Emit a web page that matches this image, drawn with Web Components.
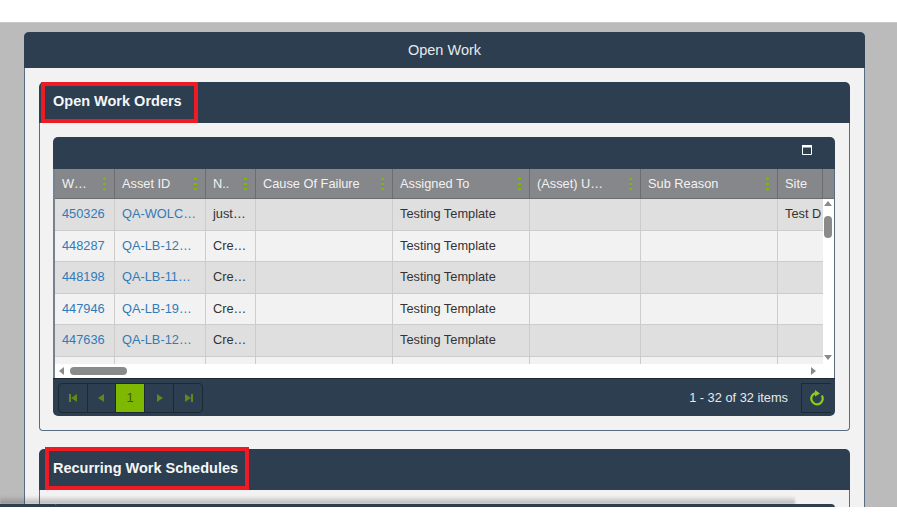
<!DOCTYPE html>
<html>
<head>
<meta charset="utf-8">
<style>
html, body { margin: 0; padding: 0; background: #fff; font-family: "Liberation Sans", Arial, sans-serif; }
body { padding-top: 22px; height: 508px; box-sizing: border-box; overflow: hidden; }
</style>
</head>
<body>
<work-page>
    <sub-panel title="Open Work Orders" mark="157">
        <work-grid></work-grid>
    </sub-panel>
    <sub-panel class="second" title="Recurring Work Schedules" mark="204" last>
        <div style="height:14px"></div>
        <div style="height:40px;background:#2c3e50;border-radius:4px 4px 0 0"></div>
    </sub-panel>
</work-page>

<script>
const pageTemplate = document.createElement('template')
pageTemplate.innerHTML = `
<style>
:host
{
    display: block;
    height: 485px;
    overflow: hidden;
    position: relative;
    background: #bbbbbb;
    border-top: 1px solid #c9c9c9;
    box-sizing: border-box;
    padding: 9px 32px 0 24px;
}
#window
{
    background: #f2f2f2;
    border-radius: 5px 5px 0 0;
    border-left: 1px solid #5a6c80;
    border-right: 1px solid #5a6c80;
    height: 600px;
}
#head
{
    height: 36px;
    margin: 0 -1px;
    background: #2c3e50;
    border-radius: 5px 5px 0 0;
    color: #e6e9ec;
    font-size: 14.5px;
    display: flex;
    align-items: center;
    justify-content: center;
}
#content
{
    padding: 14px 14px 0 14px;
    display: flex;
    flex-direction: column;
    gap: 18px;
}
#edge
{
    position: absolute;
    left: 0;
    width: 55px;
    bottom: 0;
    height: 3px;
    background: #2c3e50;
}
#shade
{
    position: absolute;
    left: 0;
    width: 795px;
    bottom: 3px;
    height: 8px;
    background: linear-gradient(rgba(60,60,60,0), rgba(60,60,60,.35));
    filter: blur(1px);
}
</style>
<div id="window">
    <div id="head">Open Work</div>
    <div id="content"><slot></slot></div>
</div>
<div id="shade"></div>
<div id="edge"></div>
`

class WorkPage extends HTMLElement
{
    constructor()
    {
        super()
        this.attachShadow({mode: "open"})
        this.shadowRoot.appendChild(pageTemplate.content.cloneNode(true))
    }
}

const panelTemplate = document.createElement('template')
panelTemplate.innerHTML = `
<style>
:host
{
    display: block;
    position: relative;
    border-radius: 5px;
}
#head
{
    height: 41px;
    background: #2c3e50;
    border-radius: 5px 5px 0 0;
    color: #f4f6f8;
    font-size: 14.5px;
    font-weight: bold;
    display: flex;
    align-items: center;
    padding: 0 0 4px 14px;
    box-sizing: border-box;
}
#body
{
    border: 1px solid #5a6c80;
    border-top: 0;
    border-radius: 0 0 4px 4px;
    padding: 14px 14px 14px 13px;
}
#mark
{
    position: absolute;
    left: 2px;
    top: 0;
    height: 41px;
    box-sizing: border-box;
    border: 4px solid #ed1c24;
}
</style>
<div id="head"><span id="title"></span></div>
<div id="body"><slot></slot></div>
<div id="mark"></div>
`

class SubPanel extends HTMLElement
{
    constructor()
    {
        super()
        this.attachShadow({mode: "open"})
        this.shadowRoot.appendChild(panelTemplate.content.cloneNode(true))
    }

    connectedCallback()
    {
        this.shadowRoot.querySelector('#title').textContent = this.getAttribute('title')
        this.removeAttribute('title')
        const mark = this.shadowRoot.querySelector('#mark')
        mark.style.width = this.getAttribute('mark') + 'px'
        if (this.hasAttribute('last'))
        {
            mark.style.left = '6px'
            mark.style.top = '-2px'
            mark.style.height = '43px'
            this.shadowRoot.querySelector('#body').style.padding = '0 14px 0 13px'
        }
    }
}

const gridTemplate = document.createElement('template')
gridTemplate.innerHTML = `
<style>
:host
{
    display: block;
    font-size: 12.8px;
    --columns: 60px 91px 50px 137px 137px 111px 137px 45px;
}
#toolbar
{
    height: 32px;
    background: #2c3e50;
    border-radius: 5px 5px 0 0;
    display: flex;
    justify-content: flex-end;
    align-items: center;
    padding-right: 23px;
}
#toolbar svg { display: block; margin-bottom: 6px; }
#frame
{
    border-left: 2px solid #75828f;
    border-right: 1px solid #5a6c80;
    background: #fff;
    overflow: hidden;
}
#head
{
    display: grid;
    grid-template-columns: var(--columns) 1fr;
    height: 30px;
    background: #85878b;
    color: #f2f2f2;
    border-bottom: 1px solid #6b6d71;
    box-sizing: border-box;
}
#head div
{
    display: flex;
    align-items: center;
    padding-left: 7px;
    border-right: 1px solid #6b6d71;
    position: relative;
    white-space: nowrap;
    overflow: hidden;
    box-sizing: border-box;
}
#head i
{
    position: absolute;
    right: 8px;
    top: 9px;
    width: 3px;
    height: 2px;
    background: #7fb800;
    box-shadow: 0 5px 0 #7fb800, 0 10px 0 #7fb800;
}
#view
{
    display: grid;
    grid-template-columns: 768px 1fr;
    height: 165px;
    overflow: hidden;
}
#rows { overflow: hidden; }
.row
{
    display: grid;
    grid-template-columns: var(--columns);
    height: 31.5px;
    background: #f2f2f2;
    border-bottom: 1px solid #cccccc;
    box-sizing: border-box;
    color: #333;
}
.row.odd { background: #dfdfdf; }
.row span
{
    display: block;
    line-height: 30.5px;
    padding-left: 7px;
    border-right: 1px solid #cccccc;
    white-space: nowrap;
    overflow: hidden;
    box-sizing: border-box;
}
.row a { color: #337ab7; text-decoration: none; }
#vbar
{
    position: relative;
    background: #fff;
}
#hbar
{
    height: 14px;
    background: #fff;
    position: relative;
}
#vthumb
{
    position: absolute;
    left: 1px;
    top: 17px;
    width: 8px;
    height: 22px;
    border-radius: 4px;
    background: #8a8a8a;
}
#hthumb
{
    position: absolute;
    left: 15px;
    top: 3px;
    width: 57px;
    height: 8px;
    border-radius: 4px;
    background: #8a8a8a;
}
.arrow { position: absolute; width: 0; height: 0; border: 4px solid transparent; }
#up { left: 1px; top: 2px; border-bottom: 5px solid #8a8a8a; border-top: 0; }
#down { left: 1px; bottom: 4px; border-top: 5px solid #8a8a8a; border-bottom: 0; }
#left { left: 4px; top: 3px; border-right: 5px solid #8a8a8a; border-left: 0; }
#right { left: 756px; top: 3px; border-left: 5px solid #8a8a8a; border-right: 0; }
</style>
<div id="toolbar">
    <svg width="10" height="10" viewBox="0 0 10 10"><path d="M.5 .5h9v9h-9z" fill="#2c3e50" stroke="#fff"/><path d="M0 0h10v2.500H0z" fill="#fff"/></svg>
</div>
<div id="frame">
    <div id="head"></div>
    <div id="view">
        <div id="rows"></div>
        <div id="vbar"><b class="arrow" id="up"></b><b id="vthumb"></b><b class="arrow" id="down"></b></div>
    </div>
    <div id="hbar"><b class="arrow" id="left"></b><b id="hthumb"></b><b class="arrow" id="right"></b></div>
</div>
<grid-pager></grid-pager>
`

const columns = [
    ['W…', 1], ['Asset ID', 1], ['N..', 1], ['Cause Of Failure', 1],
    ['Assigned To', 1], ['(Asset) U…', 1], ['Sub Reason', 1], ['Site', 0]
]

const rows = [
    ['450326', 'QA-WOLC…', 'just…', 'Test D'],
    ['448287', 'QA-LB-12…', 'Cre…', ''],
    ['448198', 'QA-LB-11…', 'Cre…', ''],
    ['447946', 'QA-LB-19…', 'Cre…', ''],
    ['447636', 'QA-LB-12…', 'Cre…', ''],
    ['', '', '', '']
]

class WorkGrid extends HTMLElement
{
    constructor()
    {
        super()
        this.attachShadow({mode: "open"})
        this.shadowRoot.appendChild(gridTemplate.content.cloneNode(true))
    }

    connectedCallback()
    {
        this.shadowRoot.querySelector('#head').innerHTML =
            columns.map(c => `<div>${c[0]}${c[1] ? '<i></i>' : ''}</div>`).join('') + '<div style="border:0"></div>'

        this.shadowRoot.querySelector('#rows').innerHTML = rows.map((r, i) => `
            <div class="row ${i % 2 ? '' : 'odd'}">
                <span><a>${r[0]}</a></span><span><a>${r[1]}</a></span><span>${r[2]}</span>
                <span></span><span>${r[0] ? 'Testing Template' : ''}</span><span></span><span></span>
                <span style="border:0">${r[3]}</span>
            </div>`).join('')
    }
}

const pagerTemplate = document.createElement('template')
pagerTemplate.innerHTML = `
<style>
:host
{
    display: flex;
    align-items: center;
    height: 38px;
    padding: 0 4px 0 5px;
    background: #2c3e50;
    border-top: 1px solid #1d2935;
    border-radius: 0 0 5px 5px;
    box-sizing: border-box;
    color: #e6e9ec;
    font-size: 12.8px;
}
#pages
{
    display: grid;
    grid-template-columns: 29px 28px 29px 29px 29px;
    width: 145px;
    height: 30px;
    border: 1px solid #1d2935;
    border-radius: 4px;
    box-sizing: border-box;
    overflow: hidden;
}
#pages span
{
    display: flex;
    align-items: center;
    justify-content: center;
    border-right: 1px solid #1d2935;
    box-sizing: border-box;
}
#pages span:last-child { border: 0; }
#pages .active { background: #7fb800; color: #3d5a10; font-size: 13px; }
#info { margin-left: auto; margin-right: 13px; }
#refresh
{
    width: 30px;
    height: 30px;
    border: 1px solid #1d2935;
    border-right: 0;
    box-sizing: border-box;
    display: flex;
    align-items: center;
    justify-content: center;
}
</style>
<div id="pages">
    <span><svg width="10" height="8" viewBox="0 0 10 8"><path d="M1 0h2v8H1zM9 0v8L3 4z" fill="#5f8a1a"/></svg></span>
    <span><svg width="7" height="8" viewBox="0 0 7 8"><path d="M6 0v8L0 4z" fill="#5f8a1a"/></svg></span>
    <span class="active">1</span>
    <span><svg width="7" height="8" viewBox="0 0 7 8"><path d="M1 0v8l6-4z" fill="#5f8a1a"/></svg></span>
    <span><svg width="10" height="8" viewBox="0 0 10 8"><path d="M9 0H7v8h2zM1 0v8l6-4z" fill="#5f8a1a"/></svg></span>
</div>
<div id="info">1 - 32 of 32 items</div>
<div id="refresh">
    <svg width="16" height="16" viewBox="0 0 16 16"><path d="M6.500 3.100A5.700 5.700 0 1 0 12.800 5.500" fill="none" stroke="#8ccf14" stroke-width="2.200"/><path d="M6 0v6.500l5-3z" fill="#8ccf14"/></svg>
</div>
`

class GridPager extends HTMLElement
{
    constructor()
    {
        super()
        this.attachShadow({mode: "open"})
        this.shadowRoot.appendChild(pagerTemplate.content.cloneNode(true))
    }
}

window.customElements.define('grid-pager', GridPager)
window.customElements.define('work-grid', WorkGrid)
window.customElements.define('sub-panel', SubPanel)
window.customElements.define('work-page', WorkPage)
</script>
</body>
</html>
